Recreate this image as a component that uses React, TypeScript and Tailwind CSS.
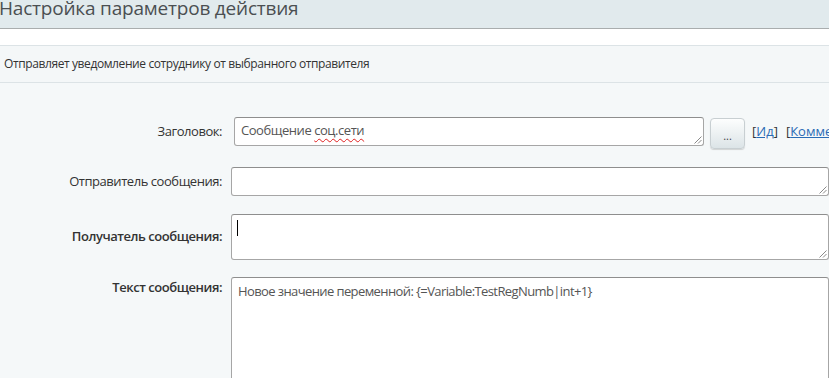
import React from "react";

const Grip = () => (
  <svg className="absolute right-[1px] bottom-[1px]" width="9" height="9" viewBox="0 0 9 9">
    <path d="M8.5 1.5 L1.5 8.5 M8.5 5 L5 8.5" stroke="#8a8a8a" strokeWidth="1" fill="none" />
  </svg>
);

const Field = ({ className, children }: { className: string; children?: React.ReactNode }) => (
  <div
    className={`relative bg-white border border-[#a6a6a6] border-t-[#8e8e8e] rounded-[3px] text-[13px] text-[#555] ${className}`}
  >
    {children}
    <Grip />
  </div>
);

export default function App() {
  return (
    <div className="w-[829px] h-[378px] overflow-hidden bg-[#f5f8f9] font-['Open_Sans',sans-serif] text-[#333]">
      {/* Title bar */}
      <div className="h-[29px] bg-[#e1eaed] border-b border-[#a9adae] overflow-hidden">
        <h1 className="text-[19px] leading-[20px] -mt-[2px] -ml-[1px] tracking-[-0.2px] text-[#4b4f52] whitespace-nowrap">
          Настройка параметров действия
        </h1>
      </div>
      <div className="h-[16px] bg-white" />

      {/* Description */}
      <div className="h-[38px] bg-[#f4f7f8] border-y border-[#dce3e6] flex items-center px-[4px] text-[12px] tracking-[-0.4px] text-[#333]">
        Отправляет уведомление сотруднику от выбранного отправителя
      </div>

      {/* Form */}
      <div className="pt-[34px] text-[13px] tracking-[-0.45px]">
        <div className="flex items-start">
          <div className="w-[222px] h-[29px] shrink-0 flex items-center justify-end">Заголовок:</div>
          <Field className="ml-[12px] w-[470px] h-[29px] shrink-0 px-[6px] pt-[3px] text-[#444]">
            Сообщение{" "}
            <span className="underline decoration-wavy decoration-[#e02020] decoration-1 underline-offset-[3px]">
              соц.сети
            </span>
          </Field>
          <button className="ml-[6px] mt-[1px] w-[35px] h-[31px] shrink-0 rounded-[4px] border border-[#c8cfd2] bg-gradient-to-b from-[#fdfefe] to-[#dce4e7] shadow-[0_1px_1px_rgba(0,0,0,0.15)] text-[11px] text-[#444] leading-none pt-[4px] tracking-normal">
            ...
          </button>
          <div className="ml-[7px] h-[29px] flex items-center whitespace-nowrap gap-[8px] tracking-normal">
            <span>
              [<a className="text-[#2a6cb5] underline">Ид</a>]
            </span>
            <span>
              [<a className="text-[#2a6cb5] underline">Комментарий</a>]
            </span>
          </div>
        </div>

        <div className="flex items-center mt-[18px]">
          <div className="w-[222px] shrink-0 text-right">Отправитель сообщения:</div>
          <Field className="ml-[9px] w-[598px] h-[29px] shrink-0" />
        </div>

        <div className="flex items-center mt-[18px]">
          <div className="w-[222px] shrink-0 text-right font-semibold">Получатель сообщения:</div>
          <Field className="ml-[9px] w-[598px] h-[46px] shrink-0">
            <div className="absolute left-[5px] top-[5px] w-px h-[16px] bg-black" />
          </Field>
        </div>

        <div className="flex items-start mt-[17px]">
          <div className="w-[222px] shrink-0 text-right font-semibold pt-[1px]">Текст сообщения:</div>
          <Field className="ml-[9px] w-[598px] h-[120px] shrink-0 px-[6px] pt-[4px] tracking-[-0.6px]">
            Новое значение переменной: {"{=Variable:TestRegNumb|int+1}"}
          </Field>
        </div>
      </div>
    </div>
  );
}
